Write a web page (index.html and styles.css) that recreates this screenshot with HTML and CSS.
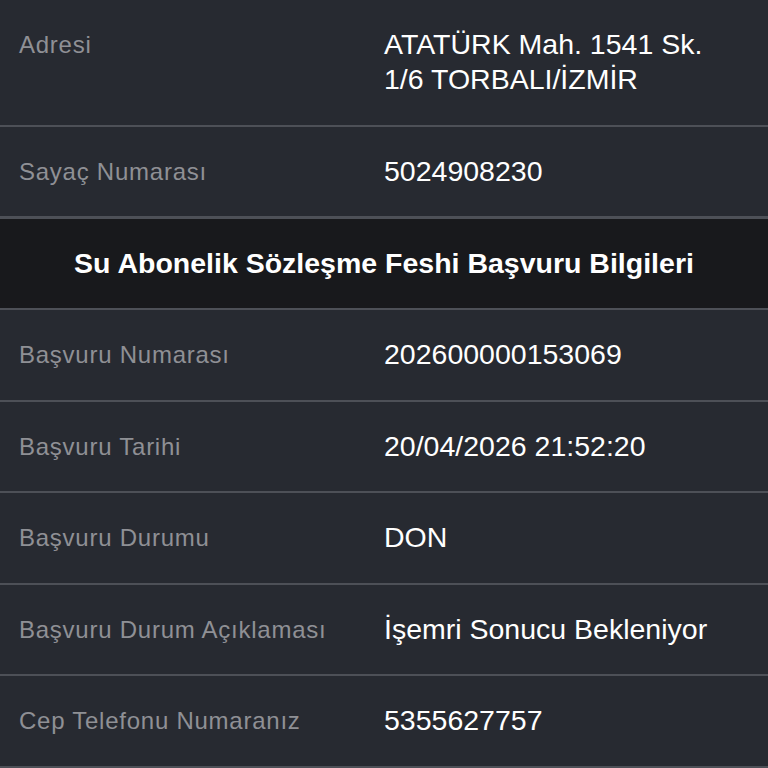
FILE: index.html
```html
<!DOCTYPE html>
<html>
	<head>
		<meta charset="utf-8">
		<title>Başvuru Bilgileri</title>
		<link rel="stylesheet" href="styles.css">
	</head>
	<body>
		<div class="list">
			<div class="row">
				<div class="label">Adresi</div>
				<div class="value">ATATÜRK Mah. 1541 Sk. 1/6 TORBALI/İZMİR</div>
			</div>
			<div class="row">
				<div class="label">Sayaç Numarası</div>
				<div class="value">5024908230</div>
			</div>
			<div class="section-title">Su Abonelik Sözleşme Feshi Başvuru Bilgileri</div>
			<div class="row">
				<div class="label">Başvuru Numarası</div>
				<div class="value">202600000153069</div>
			</div>
			<div class="row">
				<div class="label">Başvuru Tarihi</div>
				<div class="value">20/04/2026 21:52:20</div>
			</div>
			<div class="row">
				<div class="label">Başvuru Durumu</div>
				<div class="value">DON</div>
			</div>
			<div class="row">
				<div class="label">Başvuru Durum Açıklaması</div>
				<div class="value">İşemri Sonucu Bekleniyor</div>
			</div>
			<div class="row">
				<div class="label">Cep Telefonu Numaranız</div>
				<div class="value">5355627757</div>
			</div>
		</div>
	</body>
</html>
```
FILE: styles.css
```css
*{
	margin: 0;
	padding: 0;
	box-sizing: border-box;
}
body{
	background-color: #272a31;
	font-family: "Liberation Sans", Arial, sans-serif;
	color: #ffffff;
}
.list{
	width: 768px;
}
/* 每一行：左边标签，右边数值，各占一半 */
.row{
	display: grid;
	grid-template-columns: 1fr 1fr;
	align-items: start;
	padding: 27.25px 0;
	line-height: 35px;
	border-bottom: 2px solid #4d5057;
}
.label{
	padding-left: 19px;
	font-size: 24px;
	letter-spacing: 0.75px;
	color: #8f9095;
}
.value{
	padding-right: 19px;
	font-size: 28.5px;
	color: #ffffff;
}
/* 分组标题 */
.section-title{
	background-color: #18191c;
	border-top: 1px solid #4d5057;
	border-bottom: 2px solid #4d5057;
	padding: 27px 0;
	line-height: 35px;
	text-align: center;
	font-size: 28.5px;
	font-weight: bold;
}
```
